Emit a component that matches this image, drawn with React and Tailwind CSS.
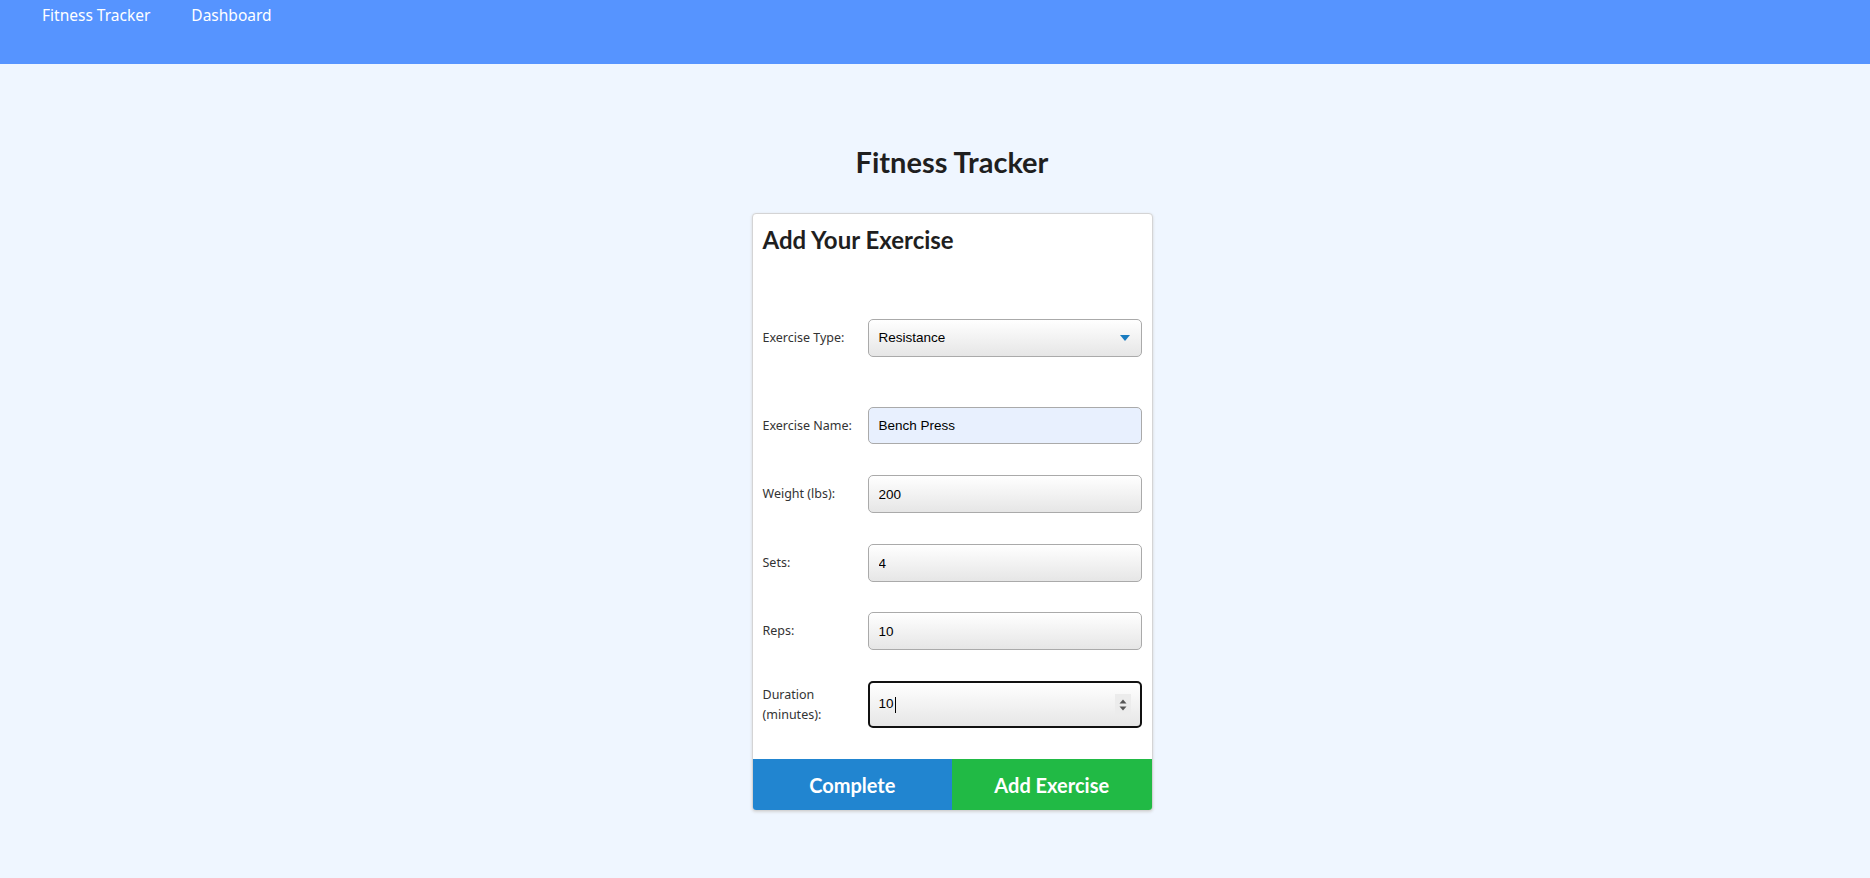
import React from "react";

const labelCls =
  "w-[105px] shrink-0 text-[12.5px] leading-[20px] text-[#333] [font-family:'Noto_Sans',sans-serif]";
const fieldCls =
  "flex-1 h-[38px] rounded-[5px] border border-[#aaaaaa] bg-gradient-to-b from-white to-[#e6e6e6] px-[10px] text-[13.5px] text-black outline-none [font-family:'Liberation_Sans',Arial,sans-serif]";

function Row({ label, children, className = "" }) {
  return (
    <div className={"flex items-center " + className}>
      <div className={labelCls}>{label}</div>
      {children}
    </div>
  );
}

export default function App() {
  return (
    <div className="min-h-[878px] bg-[#eff6ff] [font-family:'Lato',sans-serif]">
      <nav className="h-16 bg-[#5694ff] flex items-start gap-[41px] pl-[42px] pt-[4px] text-white text-[15.5px] [font-family:'Noto_Sans',sans-serif]">
        <span>Fitness Tracker</span>
        <span>Dashboard</span>
      </nav>

      <main className="flex flex-col items-center pl-[34px] pt-[80px]">
        <h1 className="text-[29px] font-bold text-[#1f1f1f] leading-[36px]">
          Fitness Tracker
        </h1>

        <div className="mt-[33px] w-[401px] bg-white rounded-[4px] border border-[#d4d4d5] shadow-[0_1px_3px_0_#d4d4d5] overflow-hidden">
          <div className="px-[10px] pt-[10px]">
            <h2 className="text-[24px] font-bold text-[#1f1f1f] leading-[32px]">
              Add Your Exercise
            </h2>

            <div className="flex flex-col mt-[63px]">
              <Row label="Exercise Type:">
                <div className={fieldCls + " flex items-center justify-between"}>
                  <span>Resistance</span>
                  <svg width="10" height="6" viewBox="0 0 10 6" className="mr-[1px]">
                    <path d="M0 0 L10 0 L5 6 Z" fill="#1a7cc0" />
                  </svg>
                </div>
              </Row>

              <Row label="Exercise Name:" className="mt-[50px]">
                <input
                  readOnly
                  value="Bench Press"
                  className="flex-1 h-[37px] rounded-[5px] border border-[#aaaaaa] bg-[#e8f0fe] px-[10px] text-[13.5px] text-black outline-none [font-family:'Liberation_Sans',Arial,sans-serif]"
                />
              </Row>

              <Row label="Weight (lbs):" className="mt-[31px]">
                <input readOnly value="200" className={fieldCls} />
              </Row>

              <Row label="Sets:" className="mt-[31px]">
                <input readOnly value="4" className={fieldCls} />
              </Row>

              <Row label="Reps:" className="mt-[30px]">
                <input readOnly value="10" className={fieldCls} />
              </Row>

              <Row label={<>Duration<br />(minutes):</>} className="mt-[31px]">
                <div className="flex-1 h-[47px] rounded-[5px] border-2 border-[#111] bg-gradient-to-b from-white to-[#e6e6e6] pl-[9px] pr-[9px] flex items-center justify-between text-[13.5px] text-black [font-family:'Liberation_Sans',Arial,sans-serif]">
                  <span className="flex items-center">
                    10<span className="inline-block w-px h-[16px] bg-black ml-px" />
                  </span>
                  <span className="w-[16px] h-[22px] bg-[#ececec] flex items-center justify-center">
                    <svg width="8" height="12" viewBox="0 0 8 12">
                      <path d="M4 0.5 L7.5 4.5 L0.5 4.5 Z" fill="#555" />
                      <path d="M4 11.5 L7.5 7.5 L0.5 7.5 Z" fill="#555" />
                    </svg>
                  </span>
                </div>
              </Row>
            </div>
          </div>

          <div className="mt-[31px] flex h-[51px]">
            <button className="flex-1 bg-[#2185d0] text-white text-[20px] font-bold">
              Complete
            </button>
            <button className="flex-1 bg-[#21ba45] text-white text-[20px] font-bold">
              Add Exercise
            </button>
          </div>
        </div>
      </main>
    </div>
  );
}
